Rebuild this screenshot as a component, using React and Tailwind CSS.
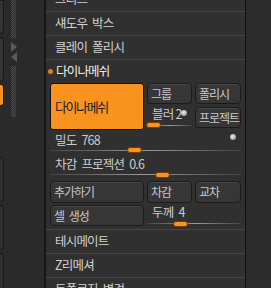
import React from "react";

const font = { fontFamily: '"Noto Sans CJK KR", "Noto Sans", sans-serif' };

function Btn({ label, className = "" }) {
  return (
    <div
      className={
        "flex shrink-0 items-center whitespace-nowrap rounded-[4px] border border-[#1b1b1b] bg-[#363636] shadow-[inset_0_1px_0_#474747] px-[3px] text-[12px] tracking-[-1px] [word-spacing:3px] text-[#c8c8c8] " +
        className
      }
    >
      {label}
    </div>
  );
}

function Handle({ className = "" }) {
  return (
    <div
      className={
        "absolute h-[6px] w-[15px] rounded-[3px] border border-[#7a3c00] bg-[#f7931e] " + className
      }
    />
  );
}

function Slider({ label, handle, className = "", textClass = "[word-spacing:3px]" }) {
  return (
    <div className={"relative shrink-0 " + className}>
      <div className={"whitespace-nowrap pl-[5px] text-[12.5px] leading-[14px] tracking-[-0.8px] text-[#cccccc] " + textClass}>{label}</div>
      <div className="absolute bottom-[2px] left-0 right-0 h-px bg-gradient-to-r from-[#444] via-[#9a9a9a] to-[#444]" />
      <Handle className={handle} />
    </div>
  );
}

function Dot({ className = "" }) {
  return (
    <div
      className={
        "absolute h-[6px] w-[6px] rounded-full bg-[radial-gradient(circle_at_40%_40%,#e8e8e8,#8a8a8a)] " + className
      }
    />
  );
}

function MenuRow({ label }) {
  return (
    <div className="flex h-[24px] shrink-0 items-center whitespace-nowrap border-b border-[#464646] pl-[9px] text-[12.5px] tracking-[-0.8px] [word-spacing:3px] text-[#d2d2d2]">
      {label}
    </div>
  );
}

export default function App() {
  return (
    <div className="flex h-[288px] w-[271px] overflow-hidden bg-[#2a2a2a]" style={font}>
      {/* left edge */}
      <div className="relative flex w-[44px] shrink-0">
        <div className="flex w-[4px] flex-col">
          <div className="h-[34px] shrink-0 rounded-br-[4px] border border-l-0 border-[#1a1a1a] bg-[#333]" />
          <div className="mt-[3px] h-[45px] shrink-0 rounded-r-[4px] border border-l-0 border-[#1a1a1a] bg-[#333]" />
          <div className="mt-[2px] h-[22px] shrink-0 rounded-r-[3px] border border-l-0 border-[#1a1a1a] bg-[#f7931e]" />
          <div className="mt-[51px] h-[45px] shrink-0 rounded-r-[4px] border border-l-0 border-[#1a1a1a] bg-[#2f2f2f]" />
          <div className="mt-[3px] h-[45px] shrink-0 rounded-r-[4px] border border-l-0 border-[#1a1a1a] bg-[#2f2f2f]" />
          <div className="mt-[3px] h-[40px] shrink-0 rounded-tr-[4px] border border-l-0 border-[#1a1a1a] bg-[#2f2f2f]" />
        </div>
        <div className="ml-[7px] flex w-[5px] flex-col">
          <div className="h-[38px] shrink-0 bg-[repeating-conic-gradient(#4a4a4a_0%_25%,#2e2e2e_0%_50%)] bg-[length:2px_2px]" />
          <div className="mt-[4px] h-0 w-0 shrink-0 border-y-[5px] border-l-[6px] border-y-transparent border-l-[#5a5a5a]" />
          <div className="h-0 w-0 shrink-0 border-y-[5px] border-r-[6px] border-y-transparent border-r-[#5a5a5a]" />
          <div className="mt-[4px] h-[51px] shrink-0 bg-[repeating-conic-gradient(#4a4a4a_0%_25%,#2e2e2e_0%_50%)] bg-[length:2px_2px]" />
        </div>
      </div>

      {/* panel */}
      <div className="w-[2px] shrink-0 bg-[#161616]" />
      <div className="flex w-[199px] shrink-0 flex-col bg-[#303030]">
        <div className="-mt-[12px] shrink-0">
          <MenuRow label="그리드" />
        </div>
        <MenuRow label="섀도우 박스" />
        <MenuRow label="클레이 폴리시" />
        <div className="relative flex h-[23px] shrink-0 items-center pl-[10px] text-[12.5px] tracking-[-0.8px] text-[#ececec]">
          <div className="absolute left-[2px] top-[9px] h-[5px] w-[5px] rounded-full bg-[#e0801c]" />
          다이나메쉬
        </div>

        <div className="relative shrink-0 px-[4px]">
          <div className="flex gap-[3px]">
            <div className="flex h-[47px] w-[94px] shrink-0 items-center whitespace-nowrap rounded-[3px] border border-[#111] bg-[#f7931e] pl-[4px] text-[13px] tracking-[-1.4px] text-[#1c1c1c]">
              다이나메쉬
            </div>
            <div className="flex flex-col">
              <div className="flex gap-[3px]">
                <Btn label="그룹" className="h-[21px] w-[45px]" />
                <Btn label="폴리시" className="h-[21px] w-[46px]" />
              </div>
              <div className="mt-[3px] flex gap-[3px]">
                <Slider label="블러 2" handle="left-[-1px] bottom-[0px]" className="h-[21px] w-[45px]" textClass="pl-[2px]" />
                <Btn label="프로젝트" className="h-[21px] w-[46px]" />
              </div>
            </div>
          </div>
          <Dot className="left-[135px] top-[27px]" />
          <Dot className="left-[184px] top-[51px]" />

          <Slider label="밀도 768" handle="left-[77px] bottom-[0px]" className="mt-[3px] h-[20px]" />
          <Slider label="차감 프로젝션 0.6" handle="left-[105px] bottom-[-1px]" className="mt-[4px] h-[20px]" />

          <div className="mt-[4px] flex gap-[3px]">
            <Btn label="추가하기" className="h-[22px] w-[94px]" />
            <Btn label="차감" className="h-[22px] w-[45px]" />
            <Btn label="교차" className="h-[22px] w-[46px]" />
          </div>
          <div className="mt-[2px] flex gap-[3px]">
            <Btn label="셀 생성" className="h-[21px] w-[94px]" />
            <Slider label="두께 4" handle="left-[26px] bottom-[-1px]" className="h-[21px] w-[94px]" />
          </div>
        </div>

        <div className="mt-[3px] shrink-0 border-t border-[#464646]">
          <MenuRow label="테시메이트" />
          <MenuRow label="Z리메셔" />
          <MenuRow label="토폴로지 변경" />
        </div>
      </div>
      <div className="w-[1px] shrink-0 bg-[#111]" />
      <div className="flex-1 bg-[#2b2b2b]" />
    </div>
  );
}
